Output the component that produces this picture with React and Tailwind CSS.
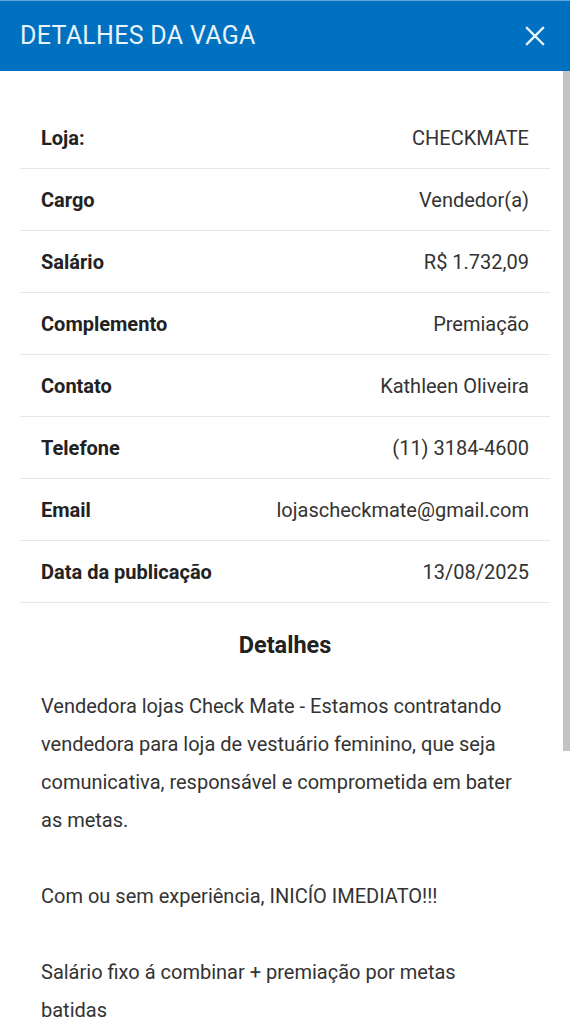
const rows = [
  ['Loja:', 'CHECKMATE'],
  ['Cargo', 'Vendedor(a)'],
  ['Salário', 'R$ 1.732,09'],
  ['Complemento', 'Premiação'],
  ['Contato', 'Kathleen Oliveira'],
  ['Telefone', '(11) 3184-4600'],
  ['Email', 'lojascheckmate@gmail.com'],
  ['Data da publicação', '13/08/2025'],
];

const paragraphs = [
  'Vendedora lojas Check Mate - Estamos contratando vendedora para loja de vestuário feminino, que seja comunicativa, responsável e comprometida em bater as metas.',
  'Com ou sem experiência, INICÍO IMEDIATO!!!',
  'Salário fixo á combinar + premiação por metas batidas',
];

const CloseIcon = () => (
  <svg width="20" height="20" viewBox="0 0 20 20" fill="none" stroke="#e8f3fb" strokeWidth="2.4" strokeLinecap="square">
    <path d="M2 2 L18 18 M18 2 L2 18" />
  </svg>
);

const App = () => (
  <div className="relative w-[570px] min-h-screen bg-white font-['Roboto',sans-serif] overflow-hidden">
    <header className="h-[71px] bg-[#0070c0] border-t border-[#5ea6dd] flex items-center justify-between pl-5 pr-[25px]">
      <h1 className="text-[25px] font-normal tracking-[0.3px] text-[#e8f3fb]">DETALHES DA VAGA</h1>
      <CloseIcon />
    </header>

    <div className="absolute right-0 top-[71px] w-[7px] h-[680px] bg-[#c4c4c4]" />

    <main className="px-5 pt-[36px]">
      <div>
        {rows.map(([label, value]) => (
          <div key={label} className="h-[62px] flex items-center justify-between px-[21px] border-b border-[#e6e6e6]">
            <span className="text-[20px] font-bold text-[#222]">{label}</span>
            <span className="text-[20px] text-[#333]">{value}</span>
          </div>
        ))}
      </div>

      <h2 className="mt-[26px] text-center text-[23.5px] leading-[32px] font-bold text-[#222]">Detalhes</h2>

      <div className="mt-[26px] pl-[21px] pr-[25px]">
        {paragraphs.map((p) => (
          <p key={p} className="text-[20px] leading-[38px] text-[#333] mb-[38px]">{p}</p>
        ))}
      </div>
    </main>
  </div>
);

export default App;
